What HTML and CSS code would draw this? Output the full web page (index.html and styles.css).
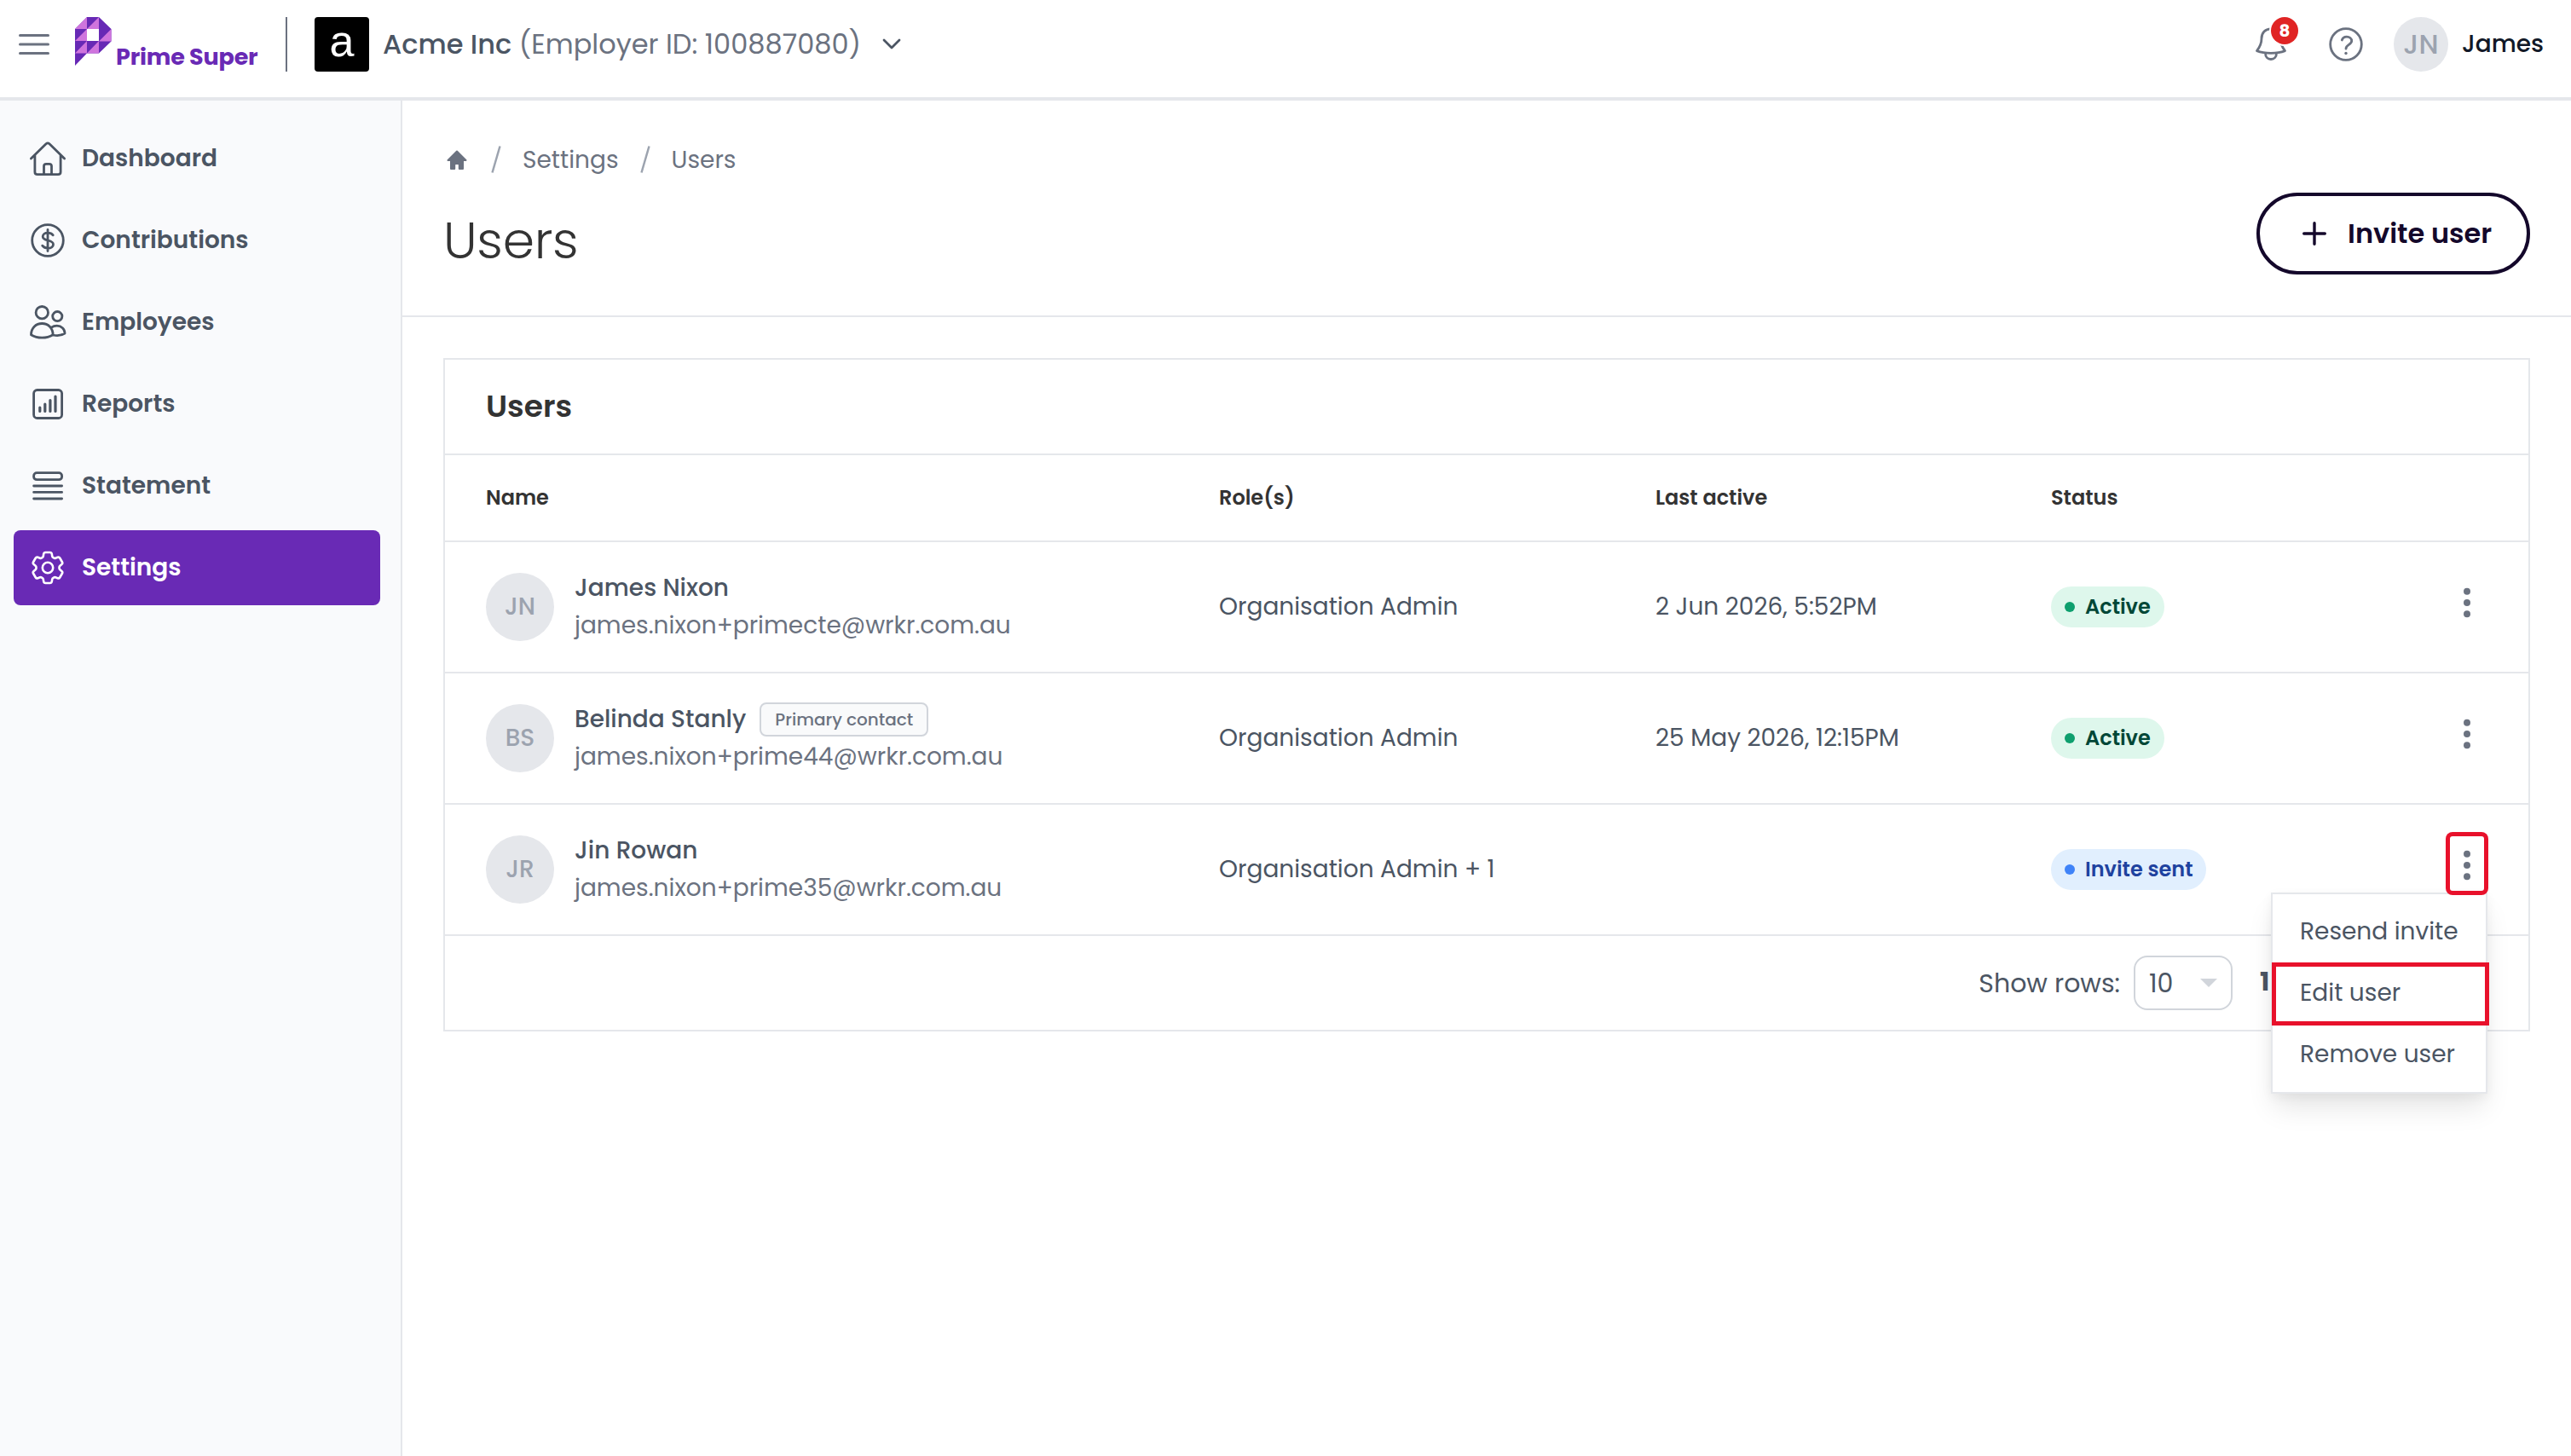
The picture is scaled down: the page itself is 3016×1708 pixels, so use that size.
FILE: index.html
```
<!DOCTYPE html>
<html lang="en">
<head>
    <meta charset="UTF-8">
    <meta name="viewport" content="width=device-width, initial-scale=1.0">
    <title>Users - Prime Super</title>
    <link rel="stylesheet" href="styles.css">
</head>
<body>

    <!-- Top bar -->
    <header class="topbar">
        <svg class="menu-icon" width="36" height="26" viewBox="0 0 36 26"><path d="M1.5 2.5h33M1.5 13h33M1.5 23.5h33"/></svg>
        <div class="brand">
            <svg class="brand-mark" width="43" height="57" viewBox="0 0 43 57">
                <path class="dark" d="M14 0h14l14.5 14v14.5L28 42.5H14L0 57V14z"/>
                <path class="pink" d="M14 0v14H0zM28 0v14H14zM14 14v14H0zM42.5 14v14.5H28zM14 28v14.5H0zM28 28v14.5H14z"/>
                <path class="hole" d="M14 14h14v14H14z"/>
            </svg>
            <span class="brand-name">Prime Super</span>
        </div>
        <div class="company">
            <div class="company-logo">a</div>
            <div class="company-name"><b>Acme Inc</b> (Employer ID: 100887080)</div>
            <svg class="chevron" width="22" height="14" viewBox="0 0 22 14"><path d="M2 2l9 9 9-9"/></svg>
        </div>
        <div class="topbar-right">
            <div class="bell">
                <svg width="48" height="48" viewBox="0 0 48 48"><path d="M24 5.8c-6.8 0-11 4.8-11 11.5 0 6-1.6 9.4-5.5 14.3 4.6 1.8 10.5 2.7 16.5 2.7s11.9-.9 16.5-2.7c-3.9-4.9-5.5-8.3-5.5-14.3 0-6.7-4.2-11.5-11-11.5zM17.5 34.5c0 4.2 2.7 7 6.5 7s6.5-2.8 6.5-7"/></svg>
                <span class="count">8</span>
            </div>
            <svg class="help" width="48" height="48" viewBox="0 0 48 48"><circle cx="24" cy="24" r="18.3"/><path d="M19.3 19c.8-2.6 2.9-3.9 5.6-3.9 3.3 0 5.8 2 5.8 4.9 0 4.5-6.7 4.4-6.7 9.2"/><circle class="dot" cx="24" cy="34.5" r="1.7"/></svg>
            <div class="avatar small">JN</div>
            <span class="user-name">James</span>
        </div>
    </header>

    <div class="layout">
        <!-- Sidebar -->
        <nav class="sidebar">
            <a class="nav-item">
                <svg width="48" height="48" viewBox="0 0 48 48"><path d="M4.4 24L22 6.8q2-1.8 4 0L43.6 24M8.9 20v19.7q0 3 3 3h24.2q3 0 3-3V20M19.5 42.7V33q0-2.7 2.7-2.7h3.6q2.7 0 2.7 2.7v9.7"/></svg>
                <span>Dashboard</span>
            </a>
            <a class="nav-item">
                <svg width="48" height="48" viewBox="0 0 48 48"><circle cx="24" cy="24" r="18.3"/><path d="M24 11.5v25M30.2 17.8c-1.4-1.8-3.5-2.7-6.2-2.7-3.3 0-5.8 1.7-5.8 4.3 0 6.2 12.3 3 12.3 9.3 0 2.7-2.5 4.5-6.2 4.5-3 0-5.2-1.1-6.6-3"/></svg>
                <span>Contributions</span>
            </a>
            <a class="nav-item">
                <svg width="48" height="48" viewBox="0 0 48 48"><circle cx="17.3" cy="12.7" r="7.2"/><circle cx="35.3" cy="17.1" r="5.6"/><path d="M4.5 38.7c0-7.6 5.4-13.2 12.8-13.2s12.8 5.6 12.8 13.2c-3.6 2.2-8 3.4-12.8 3.4s-9.2-1.2-12.8-3.4zM28.3 30.2c1.8-1.3 4-2 6.4-2 5.4 0 9.3 3.8 9.3 8.8-3.5 2.4-9 3-13.8 2"/></svg>
                <span>Employees</span>
            </a>
            <a class="nav-item">
                <svg width="48" height="48" viewBox="0 0 48 48"><rect x="7.6" y="7.5" width="33" height="33" rx="4"/><path class="bars" d="M14.8 28v4.5M20.8 24v8.5M26.9 19.5v13M33 15v17.5"/></svg>
                <span>Reports</span>
            </a>
            <a class="nav-item">
                <svg width="48" height="48" viewBox="0 0 48 48"><rect x="7.6" y="8.7" width="33" height="8" rx="3.5"/><path d="M7.6 24h33M7.6 31.4h33M7.6 39h33"/></svg>
                <span>Statement</span>
            </a>
            <a class="nav-item active">
                <svg width="48" height="48" viewBox="0 0 24 24"><path d="M9.594 3.94c.09-.542.56-.94 1.11-.94h2.593c.55 0 1.02.398 1.11.94l.213 1.281c.063.374.313.686.645.87.074.04.147.083.22.127.325.196.72.257 1.075.124l1.217-.456a1.125 1.125 0 0 1 1.37.49l1.296 2.247a1.125 1.125 0 0 1-.26 1.431l-1.003.827c-.293.241-.438.613-.43.992a7.723 7.723 0 0 1 0 .255c-.008.378.137.75.43.991l1.004.827c.424.35.534.955.26 1.43l-1.298 2.247a1.125 1.125 0 0 1-1.369.491l-1.217-.456c-.355-.133-.75-.072-1.076.124a6.47 6.47 0 0 1-.22.128c-.331.183-.581.495-.644.869l-.213 1.281c-.09.543-.56.94-1.11.94h-2.594c-.55 0-1.019-.398-1.11-.94l-.213-1.281c-.062-.374-.312-.686-.644-.87a6.52 6.52 0 0 1-.22-.127c-.325-.196-.72-.257-1.076-.124l-1.217.456a1.125 1.125 0 0 1-1.369-.49l-1.297-2.247a1.125 1.125 0 0 1 .26-1.431l1.004-.827c.292-.24.437-.613.43-.991a6.932 6.932 0 0 1 0-.255c.007-.38-.138-.751-.43-.992l-1.004-.827a1.125 1.125 0 0 1-.26-1.43l1.297-2.247a1.125 1.125 0 0 1 1.37-.491l1.216.456c.356.133.751.072 1.076-.124.072-.044.146-.086.22-.128.332-.183.582-.495.644-.869l.214-1.28Z"/><circle cx="12" cy="12" r="3.1"/></svg>
                <span>Settings</span>
            </a>
        </nav>

        <main class="main">
            <div class="page-header">
                <div>
                    <div class="breadcrumb">
                        <svg class="home" width="24" height="24" viewBox="0 0 24 24"><path d="M12 1.5L1.5 12H5v10h4.2v-4.5q0-1.5 1.5-1.5h2.6q1.5 0 1.5 1.5V22H19V12h3.5z"/></svg>
                        <svg class="slash" width="12" height="32" viewBox="0 0 12 32"><path d="M1.5 31.5l9-31"/></svg>
                        <span class="crumb">Settings</span>
                        <svg class="slash" width="12" height="32" viewBox="0 0 12 32"><path d="M1.5 31.5l9-31"/></svg>
                        <span class="crumb">Users</span>
                    </div>
                    <h1>Users</h1>
                </div>
                <button class="invite-btn">
                    <svg width="28" height="28" viewBox="0 0 28 28"><path d="M14 1.7v24.6M1.7 14h24.6"/></svg>
                    <span>Invite user</span>
                </button>
            </div>

            <!-- Users table -->
            <section class="card">
                <h2>Users</h2>
                <div class="row head">
                    <span>Name</span>
                    <span>Role(s)</span>
                    <span>Last active</span>
                    <span>Status</span>
                </div>
                <div class="row">
                    <div class="person">
                        <div class="avatar">JN</div>
                        <div>
                            <div class="name">James Nixon</div>
                            <div class="email">james.nixon+primecte@wrkr.com.au</div>
                        </div>
                    </div>
                    <span>Organisation Admin</span>
                    <span>2 Jun 2026, 5:52PM</span>
                    <span class="status active">Active</span>
                    <div class="actions">
                        <button class="dots"><svg width="10" height="36" viewBox="0 0 10 36"><circle cx="5" cy="4.7" r="4"/><circle cx="5" cy="18" r="4"/><circle cx="5" cy="31.3" r="4"/></svg></button>
                    </div>
                </div>
                <div class="row">
                    <div class="person">
                        <div class="avatar">BS</div>
                        <div>
                            <div class="name">Belinda Stanly <span class="tag">Primary contact</span></div>
                            <div class="email">james.nixon+prime44@wrkr.com.au</div>
                        </div>
                    </div>
                    <span>Organisation Admin</span>
                    <span>25 May 2026, 12:15PM</span>
                    <span class="status active">Active</span>
                    <div class="actions">
                        <button class="dots"><svg width="10" height="36" viewBox="0 0 10 36"><circle cx="5" cy="4.7" r="4"/><circle cx="5" cy="18" r="4"/><circle cx="5" cy="31.3" r="4"/></svg></button>
                    </div>
                </div>
                <div class="row">
                    <div class="person">
                        <div class="avatar">JR</div>
                        <div>
                            <div class="name">Jin Rowan</div>
                            <div class="email">james.nixon+prime35@wrkr.com.au</div>
                        </div>
                    </div>
                    <span>Organisation Admin + 1</span>
                    <span></span>
                    <span class="status sent">Invite sent</span>
                    <div class="actions">
                        <button class="dots marked"><svg width="10" height="36" viewBox="0 0 10 36"><circle cx="5" cy="4.7" r="4"/><circle cx="5" cy="18" r="4"/><circle cx="5" cy="31.3" r="4"/></svg></button>
                        <div class="menu">
                            <a>Resend invite</a>
                            <a class="marked">Edit user</a>
                            <a>Remove user</a>
                        </div>
                    </div>
                </div>
                <div class="pager">
                    <span>Show rows:</span>
                    <div class="select"><span>10</span> <svg width="20" height="10" viewBox="0 0 20 10"><path d="M0 0h20L10 10z"/></svg></div>
                    <b>1</b>
                </div>
            </section>
        </main>
    </div>

</body>
</html>
```
FILE: styles.css
```
* {
    box-sizing: border-box;
}

body {
    font-family: Poppins, Inter, 'Open Sans', sans-serif;
    font-size: 28px;
    line-height: 44px;
    background-color: #fff;
    color: #4b5563;
    margin: 0;
}

svg {
    display: block;
    flex: none;
    fill: none;
    stroke: currentColor;
    stroke-width: 2.8;
    stroke-linecap: round;
    stroke-linejoin: round;
}

button {
    font: inherit;
    color: inherit;
    background: none;
    border: none;
    padding: 0;
    cursor: pointer;
}

/* Top bar */
.topbar {
    display: flex;
    align-items: center;
    height: 118px;
    padding: 0 32px 10px 22px;
    border-bottom: 4px solid #e5e7eb;
    color: #6b7280;
}

.menu-icon {
    stroke-width: 3;
}

.brand {
    display: flex;
    align-items: flex-start;
    height: 64px;
    width: 249px;
    margin-left: 30px;
    border-right: 2px solid #6b7280;
}

.brand-mark {
    stroke: none;
}

.brand-mark .dark {
    fill: #6729b5;
}

.brand-mark .pink {
    fill: #cf74dd;
}

.brand-mark .hole {
    fill: #fff;
}

.brand-name {
    margin: 25px 0 0 5px;
    font-size: 27px;
    font-weight: 700;
    letter-spacing: -0.2px;
    color: #692ab5;
    white-space: nowrap;
}

.company {
    display: flex;
    align-items: center;
    margin-left: 32px;
}

.company-logo {
    width: 64px;
    height: 64px;
    border-radius: 4px;
    background-color: #000;
    color: #fff;
    font-family: 'Liberation Sans', sans-serif;
    font-size: 52px;
    line-height: 56px;
    text-align: center;
}

.company-name {
    margin-left: 16px;
    font-size: 32px;
}

.company-name b {
    font-weight: 500;
    color: #4b5563;
}

.chevron {
    margin-left: 25px;
    color: #4b5563;
}

.topbar-right {
    display: flex;
    align-items: center;
    margin-left: auto;
}

.bell {
    position: relative;
}

.count {
    position: absolute;
    left: 24px;
    top: -8px;
    width: 32px;
    height: 32px;
    border-radius: 50%;
    background-color: #e02424;
    box-shadow: 0 0 0 2px #fff;
    color: #fff;
    font-size: 20px;
    font-weight: 700;
    line-height: 33px;
    text-align: center;
}

.help {
    margin: 0 32px 0 40px;
}

.dot {
    fill: currentColor;
    stroke: none;
}

.avatar {
    flex: none;
    width: 80px;
    height: 80px;
    border-radius: 50%;
    background-color: #e5e7eb;
    color: #9ca3af;
    font-weight: 500;
    line-height: 80px;
    text-align: center;
}

.avatar.small {
    width: 64px;
    height: 64px;
    font-size: 32px;
    line-height: 64px;
}

.user-name {
    margin-left: 16px;
    font-weight: 500;
    color: #111827;
}

.layout {
    display: flex;
    height: 1590px;
}

/* Sidebar */
.sidebar {
    flex: none;
    width: 472px;
    padding: 24px 24px 0 16px;
    background-color: #f9fafc;
    border-right: 2px solid #e5e7eb;
}

.nav-item {
    display: flex;
    align-items: center;
    gap: 16px;
    height: 88px;
    margin-bottom: 8px;
    padding-left: 16px;
    border-radius: 8px;
    font-weight: 600;
}

.nav-item.active {
    background-color: #692ab5;
    color: #fff;
}

.nav-item.active svg {
    stroke-width: 1.3;
}

.nav-item .bars {
    stroke-width: 3.2;
}

/* Page header */
.main {
    flex: 1;
}

.page-header {
    display: flex;
    justify-content: space-between;
    height: 254px;
    padding: 46px 48px 0 48px;
    border-bottom: 2px solid #e5e7eb;
}

.breadcrumb {
    display: flex;
    align-items: center;
    padding-top: 2px;
    color: #6b7280;
}

.home {
    margin: 0 28px 0 4px;
    fill: currentColor;
    stroke-width: 2;
}

.slash {
    margin-bottom: 2px;
    color: #9ca3af;
    stroke-linecap: butt;
    stroke-width: 2.5;
}

.crumb {
    margin: 0 25px;
}

h1 {
    margin: 30px 0 0 0;
    font-size: 60px;
    font-weight: 300;
    letter-spacing: -0.3px;
    line-height: 84px;
    color: #333;
}

.invite-btn {
    display: flex;
    align-items: center;
    gap: 25px;
    width: 321px;
    height: 96px;
    margin-top: 62px;
    padding-left: 50px;
    border: 4px solid #14082b;
    border-radius: 48px;
    color: #14082b;
    font-size: 32px;
    font-weight: 600;
    white-space: nowrap;
}

.invite-btn svg {
    stroke-width: 3.4;
}

/* Card */
.card {
    margin: 48px;
    border: 2px solid #e5e7eb;
}

h2 {
    margin: 0;
    padding: 0 48px;
    height: 110px;
    font-size: 36px;
    font-weight: 600;
    line-height: 109px;
    color: #333;
}

.row {
    display: grid;
    grid-template-columns: 860px 512px 464px 1fr 50px;
    align-items: center;
    height: 154px;
    padding: 0 48px;
    border-top: 2px solid #e5e7eb;
}

.row.head {
    height: 102px;
    font-size: 24px;
    font-weight: 600;
    color: #333;
}

.person {
    display: flex;
    align-items: center;
    gap: 24px;
}

.name {
    display: flex;
    align-items: center;
    gap: 16px;
    font-weight: 500;
}

.email {
    color: #6b7280;
}

.tag {
    height: 40px;
    padding: 0 16px;
    border: 2px solid #d1d5db;
    border-radius: 8px;
    background-color: #f9fafb;
    color: #6b7280;
    font-size: 20px;
    line-height: 37px;
}

.status {
    justify-self: start;
    display: flex;
    align-items: center;
    gap: 12px;
    height: 48px;
    padding: 0 16px;
    border-radius: 24px;
    font-size: 24px;
    font-weight: 600;
}

.status::before {
    content: '';
    width: 12px;
    height: 12px;
    border-radius: 50%;
    background-color: #0e9f6e;
}

.status.active {
    background-color: #def7ec;
    color: #014737;
}

.status.sent {
    background-color: #e1effe;
    color: #1e429f;
}

.status.sent::before {
    background-color: #3f83f8;
}

/* Row actions */
.actions {
    position: relative;
}

.dots {
    position: relative;
    z-index: 2;
    display: flex;
    align-items: center;
    justify-content: center;
    width: 50px;
    height: 74px;
    margin: 0 0 14px 1px;
    padding-top: 4px;
    color: #6b7280;
}

.dots svg {
    fill: currentColor;
    stroke: none;
}

.dots.marked {
    box-shadow: inset 0 0 0 5px #e8112b;
    border-radius: 8px;
}

.menu {
    position: absolute;
    z-index: 1;
    top: 71px;
    right: 0;
    width: 254px;
    padding: 7px 0 9px;
    border: 2px solid #e5e7eb;
    background-color: #fff;
    box-shadow: 0 20px 30px -4px rgba(0, 0, 0, 0.1), 0 4px 12px rgba(0, 0, 0, 0.05);
}

.menu a {
    position: relative;
    display: block;
    height: 72px;
    padding-left: 32px;
    line-height: 74px;
}

.menu .marked::after {
    content: '';
    position: absolute;
    top: 1px;
    left: -1px;
    right: -4px;
    height: 64px;
    border: 5px solid #e8112b;
}

/* Pager */
.pager {
    display: flex;
    align-items: center;
    justify-content: flex-end;
    height: 112px;
    padding: 0 48px;
    border-top: 2px solid #e5e7eb;
    font-size: 30px;
}

.pager span {
    padding-top: 2px;
}

.select {
    display: flex;
    align-items: center;
    justify-content: space-between;
    width: 116px;
    height: 64px;
    margin: 0 32px 0 16px;
    padding: 0 16px;
    border: 2px solid #d1d5db;
    border-radius: 16px;
}

.select svg {
    fill: #d1d5db;
    stroke: none;
}

.pager b {
    width: 267px;
    padding-bottom: 3px;
}
```
